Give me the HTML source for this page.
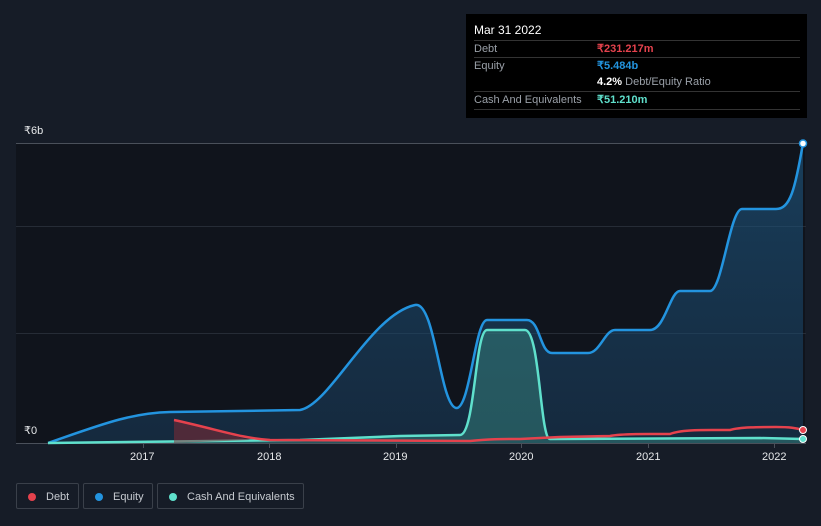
<!DOCTYPE html>
<html><head><style>
body{margin:0;width:821px;height:526px;background:#161c27;font-family:"Liberation Sans",sans-serif;overflow:hidden;position:relative}
.tt{position:absolute;left:466px;top:14px;width:341px;height:104px;background:#000;color:#fff;font-size:11px}
.row{position:absolute;left:8px;width:326px;border-top:1px solid #333;height:17px;line-height:17px}
.lab{color:#9aa0a8;position:absolute;left:0}
.val{position:absolute;left:123px;font-weight:bold}
.leg{position:absolute;top:483px;height:26px;border:1px solid #3a404a;border-radius:2px;color:#c6cad0;font-size:11px;line-height:26px;box-sizing:border-box}
.dot{display:inline-block;width:8px;height:8px;border-radius:50%;margin:0 10px 0 11px;vertical-align:-1px}
.ax{position:absolute;color:#e6e8ea;font-size:11px}
</style></head><body>
<svg width="821" height="526" style="position:absolute;left:0;top:0">
<defs><linearGradient id="g" x1="0" y1="0" x2="0" y2="1"><stop offset="0" stop-color="#1e5a85" stop-opacity="0.6"/><stop offset="1" stop-color="#1a3f60" stop-opacity="0.5"/></linearGradient></defs>
<rect x="16" y="143" width="789" height="301" fill="#10141c"/>
<line x1="16" y1="143.5" x2="806" y2="143.5" stroke="#4a505a"/>
<line x1="16" y1="226.5" x2="806" y2="226.5" stroke="#262c36"/>
<line x1="16" y1="333.5" x2="806" y2="333.5" stroke="#262c36"/>
<line x1="16" y1="443.5" x2="806" y2="443.5" stroke="#4a505a"/>
<g stroke="#4a505a"><line x1="143.5" y1="444" x2="143.5" y2="448"/><line x1="269.5" y1="444" x2="269.5" y2="448"/><line x1="396.5" y1="444" x2="396.5" y2="448"/><line x1="521.5" y1="444" x2="521.5" y2="448"/><line x1="648.5" y1="444" x2="648.5" y2="448"/><line x1="774.5" y1="444" x2="774.5" y2="448"/></g>
<path d="M48,443 C100,425 130,413 170,412 L300,410 C330,405 370,315 415,305 C435,300 440,405 456,408 C470,410 475,320 487,320 L527,320 C540,320 540,353 552,353 L588,353 C600,353 605,330 615,330 L650,330 C665,330 670,291 680,291 L710,291 C722,291 730,209 742,209 L776,209 C790,209 795,190 803,143 L803,443 Z" fill="url(#g)"/>
<path d="M48,443 C100,425 130,413 170,412 L300,410 C330,405 370,315 415,305 C435,300 440,405 456,408 C470,410 475,320 487,320 L527,320 C540,320 540,353 552,353 L588,353 C600,353 605,330 615,330 L650,330 C665,330 670,291 680,291 L710,291 C722,291 730,209 742,209 L776,209 C790,209 795,190 803,143" fill="none" stroke="#2394df" stroke-width="2.5"/>
<path d="M48,443 L300,440 L400,436 L460,435 C475,435 475,330 487,330 L525,330 C540,330 540,439 550,439 L760,438 L803,439 L803,443 L48,443Z" fill="#3a8f86" fill-opacity="0.45"/>
<path d="M48,443 L300,440 L400,436 L460,435 C475,435 475,330 487,330 L525,330 C540,330 540,439 550,439 L760,438 L803,439" fill="none" stroke="#5fe0cc" stroke-width="2.5"/>
<path d="M174,420 L174,443 L250,440 Z" fill="#8a2a33" fill-opacity="0.5"/>
<path d="M174,420 C220,430 240,438 270,440 L470,441 C490,439 500,439 520,439 L560,437 L610,436 C620,434 640,434 650,434 L670,434 C680,430 700,430 712,430 L730,430 C740,427 760,427 776,427 C790,427 796,428 803,430" fill="none" stroke="#e5424d" stroke-width="2.5"/>
<circle cx="803" cy="143.5" r="3.5" fill="#fff" stroke="#2394df" stroke-width="1.5"/>
<circle cx="803" cy="430" r="3.5" fill="#e5424d" stroke="#fff" stroke-width="1"/>
<circle cx="803" cy="439" r="3.5" fill="#5fe0cc" stroke="#fff" stroke-width="1"/>
</svg>
<div class="ax" style="left:24px;top:124px">₹6b</div>
<div class="ax" style="left:24px;top:424px">₹0</div>
<div class="ax" style="left:130px;top:451px">2017</div>
<div class="ax" style="left:257px;top:451px">2018</div>
<div class="ax" style="left:383px;top:451px">2019</div>
<div class="ax" style="left:509px;top:451px">2020</div>
<div class="ax" style="left:636px;top:451px">2021</div>
<div class="ax" style="left:762px;top:451px">2022</div>
<div class="tt">
<div style="position:absolute;left:8px;top:9px;font-size:12px">Mar 31 2022</div>
<div class="row" style="top:26px"><span class="lab">Debt</span><span class="val" style="color:#e5424d">₹231.217m</span></div>
<div class="row" style="top:43px"><span class="lab">Equity</span><span class="val" style="color:#2394df">₹5.484b</span></div>
<div class="row" style="top:60px;border-top:none"><span class="val" style="color:#fff">4.2% <span style="color:#9aa0a8;font-weight:normal">Debt/Equity Ratio</span></span></div>
<div class="row" style="top:77px"><span class="lab">Cash And Equivalents</span><span class="val" style="color:#5fe0cc">₹51.210m</span></div>
<div class="row" style="top:95px;height:0"></div>
</div>
<div class="leg" style="left:16px;width:63px"><span class="dot" style="background:#e5424d"></span>Debt</div>
<div class="leg" style="left:83px;width:70px"><span class="dot" style="background:#2394df"></span>Equity</div>
<div class="leg" style="left:157px;width:147px"><span class="dot" style="background:#5fe0cc"></span>Cash And Equivalents</div>
</body></html>
